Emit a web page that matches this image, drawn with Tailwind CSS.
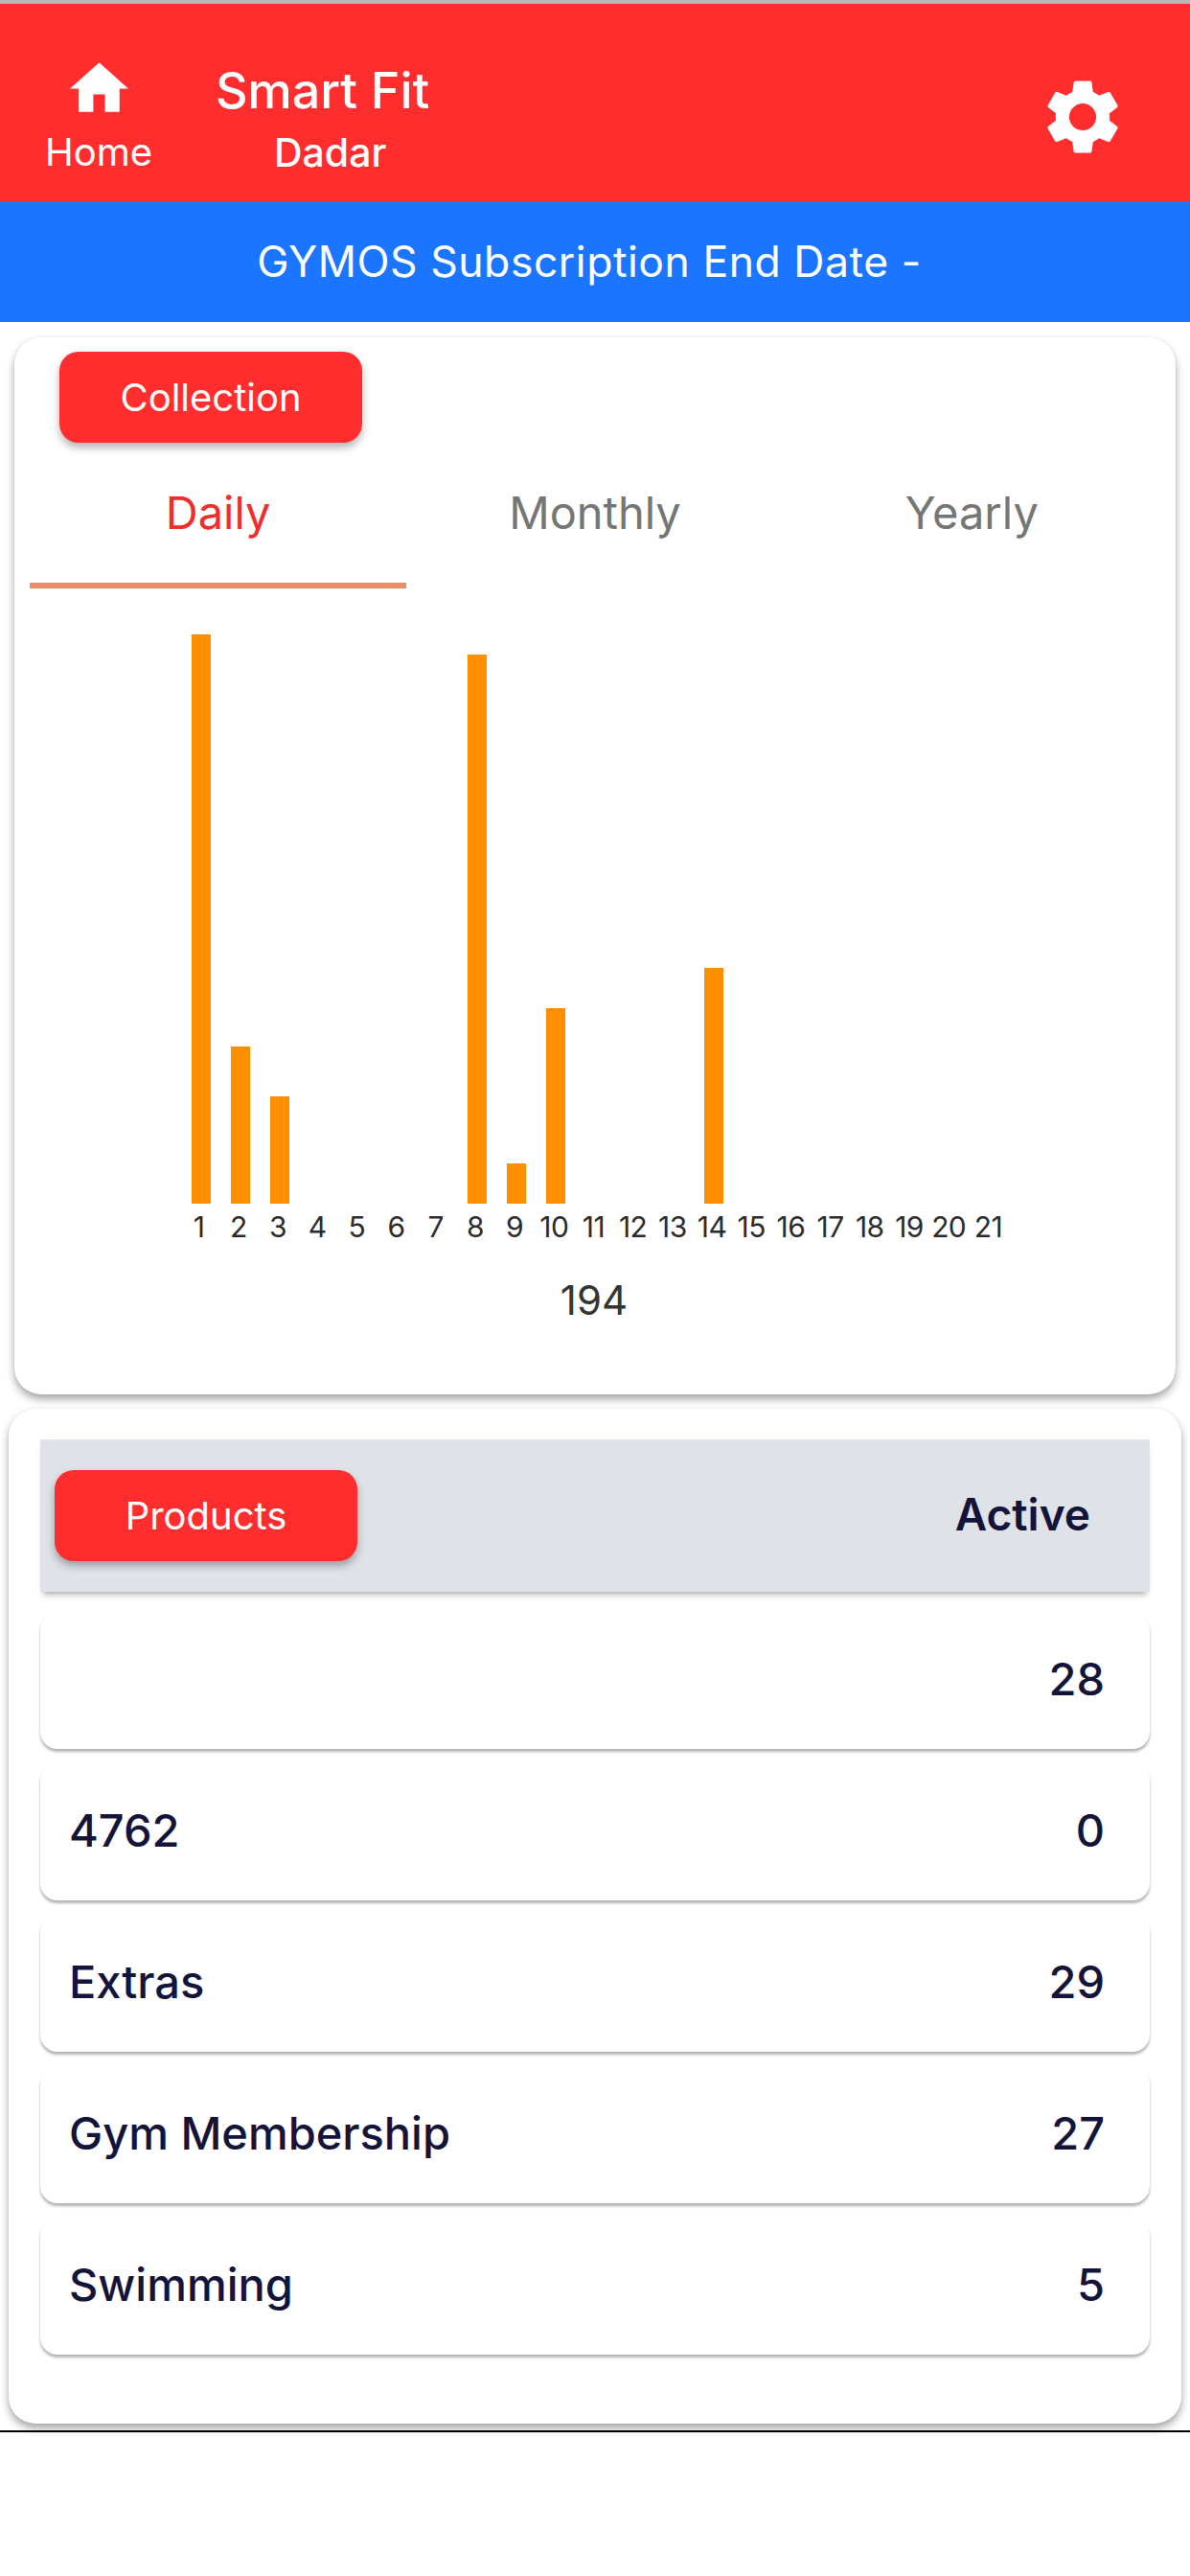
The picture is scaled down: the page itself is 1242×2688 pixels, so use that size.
<!DOCTYPE html>
<html><head><meta charset="utf-8">
<script src="https://cdn.jsdelivr.net/npm/@tailwindcss/browser@4"></script>
</head>
<body class="bg-white">
<div class="w-[1242px] h-[2688px] bg-white overflow-hidden font-['Inter',sans-serif]">
  <div class="h-[4px] bg-[#b8b8b8]"></div>
  <header class="h-[206px] bg-[#ff2d2d] text-white flex relative">
    <div class="w-[206px] pl-[47px] flex flex-col">
      <svg class="w-[73px] h-[73px] mt-[52px] ml-[20px] fill-white" viewBox="0 0 24 24"><path d="M10 20v-6h4v6h5v-8h3L12 3 2 12h3v8z"/></svg>
      <span class="w-[111px] text-center text-[40px] leading-[46px] mt-[7px] whitespace-nowrap">Home</span>
    </div>
    <div class="w-[260px] pl-[19px] flex flex-col">
      <span class="text-[52px] leading-[60px] mt-[61px] font-medium whitespace-nowrap">Smart Fit</span>
      <span class="text-[41px] leading-[46px] mt-[11px] ml-[61px] font-medium whitespace-nowrap">Dadar</span>
    </div>
    <div class="ml-auto mr-[65px] mt-[71px]">
      <svg class="w-[94px] h-[94px] fill-white" viewBox="0 0 24 24"><path d="M19.14 12.94c.04-.3.06-.61.06-.94 0-.32-.02-.64-.07-.94l2.03-1.58c.18-.14.23-.41.12-.61l-1.92-3.32c-.12-.22-.37-.29-.59-.22l-2.39.96c-.5-.38-1.03-.7-1.62-.94l-.36-2.54c-.04-.24-.24-.41-.48-.41h-3.84c-.24 0-.43.17-.47.41l-.36 2.54c-.59.24-1.13.57-1.62.94l-2.39-.96c-.22-.08-.47 0-.59.22L2.74 8.87c-.12.21-.08.47.12.61l2.03 1.58c-.05.3-.09.63-.09.94s.02.64.07.94l-2.03 1.58c-.18.14-.23.41-.12.61l1.92 3.32c.12.22.37.29.59.22l2.39-.96c.5.38 1.03.7 1.62.94l.36 2.54c.05.24.24.41.48.41h3.84c.24 0 .44-.17.47-.41l.36-2.54c.59-.24 1.13-.56 1.62-.94l2.39.96c.22.08.47 0 .59-.22l1.92-3.32c.12-.22.07-.47-.12-.61l-2.01-1.58zM12 15.6c-1.98 0-3.6-1.62-3.6-3.6s1.62-3.6 3.6-3.6 3.6 1.62 3.6 3.6-1.62 3.6-3.6 3.6z"/></svg>
    </div>
  </header>
  <div class="h-[126px] bg-[#1a76fe] text-white flex items-center justify-center pr-[12px] text-[44.5px] tracking-[0.012em]">GYMOS Subscription End Date -</div>

  <section class="mt-[16px] mx-[15px] h-[1103px] bg-white rounded-[28px] shadow-[0_5px_8px_rgba(0,0,0,0.35),0_0_3px_rgba(0,0,0,0.05)] pt-[15px] px-[16px]">
    <div class="ml-[31px] w-[316px] h-[95px] rounded-[20px] bg-[#ff2d2d] text-white flex items-center justify-center text-[40px] shadow-[0_5px_8px_rgba(0,0,0,0.3)]">Collection</div>
    <div class="mt-[32px] grid grid-cols-3 w-[1180px] text-[47px]">
      <div class="h-[120px] flex justify-center pt-[6px] text-[#f02d2d] border-b-[6px] border-[#ec8f67]">Daily</div>
      <div class="h-[120px] flex justify-center pt-[6px] text-[#757575]">Monthly</div>
      <div class="h-[120px] flex justify-center pt-[6px] text-[#757575]">Yearly</div>
    </div>
    <div class="ml-[158px] mt-[48px] h-[594px] w-[866px] grid grid-cols-[repeat(21,41.2px)] items-end justify-items-center">
      <div class="w-[20px] h-[594px] bg-[#ff8f00]"></div>
      <div class="w-[20px] h-[164px] bg-[#ff8f00]"></div>
      <div class="w-[20px] h-[112px] bg-[#ff8f00]"></div>
      <div></div><div></div><div></div><div></div>
      <div class="w-[20px] h-[573px] bg-[#ff8f00]"></div>
      <div class="w-[20px] h-[42px] bg-[#ff8f00]"></div>
      <div class="w-[20px] h-[204px] bg-[#ff8f00]"></div>
      <div></div><div></div><div></div>
      <div class="w-[20px] h-[246px] bg-[#ff8f00]"></div>
    </div>
    <div class="ml-[156px] mt-[6px] w-[866px] grid grid-cols-[repeat(21,41.2px)] justify-items-center text-[30px] leading-[36px] text-[#2b2b2b] tracking-[-0.02em]">
      <span>1</span><span>2</span><span>3</span><span>4</span><span>5</span><span>6</span><span>7</span><span>8</span><span>9</span><span>10</span><span>11</span><span>12</span><span>13</span><span>14</span><span>15</span><span>16</span><span>17</span><span>18</span><span>19</span><span>20</span><span>21</span>
    </div>
    <div class="mt-[34px] pr-[2px] text-center text-[42px] leading-[50px] text-[#333333] w-[1180px]">194</div>
  </section>

  <div class="h-[67px] relative">
    <section class="absolute left-[9px] top-[15px] w-[1224px] h-[1059px] bg-white rounded-[28px] shadow-[0_5px_8px_rgba(0,0,0,0.35),0_0_3px_rgba(0,0,0,0.05)] pt-[32px] px-[33px]">
      <div class="h-[159px] bg-[#dfe2e7] shadow-[0_6px_6px_-3px_rgba(0,0,0,0.3)] flex items-center pl-[15px] pr-[62px] justify-between">
        <div class="w-[316px] h-[95px] rounded-[20px] bg-[#ff2d2d] text-white flex items-center justify-center text-[40px] shadow-[0_5px_8px_rgba(0,0,0,0.3)]">Products</div>
        <span class="text-[46px] -mt-[2px] font-semibold text-[#14143a]">Active</span>
      </div>
      <div class="mt-[21px] flex flex-col gap-[15px] text-[47px] font-medium text-[#14143a]">
        <div class="h-[143px] rounded-[18px] bg-white shadow-[0_3px_3px_rgba(0,0,0,0.3),0_0_2px_rgba(0,0,0,0.02)] flex items-center justify-between pl-[30px] pr-[47px] pb-[3px]"><span></span><span>28</span></div>
        <div class="h-[143px] rounded-[18px] bg-white shadow-[0_3px_3px_rgba(0,0,0,0.3),0_0_2px_rgba(0,0,0,0.02)] flex items-center justify-between pl-[30px] pr-[47px] pb-[3px]"><span>4762</span><span>0</span></div>
        <div class="h-[143px] rounded-[18px] bg-white shadow-[0_3px_3px_rgba(0,0,0,0.3),0_0_2px_rgba(0,0,0,0.02)] flex items-center justify-between pl-[30px] pr-[47px] pb-[3px]"><span>Extras</span><span>29</span></div>
        <div class="h-[143px] rounded-[18px] bg-white shadow-[0_3px_3px_rgba(0,0,0,0.3),0_0_2px_rgba(0,0,0,0.02)] flex items-center justify-between pl-[30px] pr-[47px] pb-[3px]"><span>Gym Membership</span><span>27</span></div>
        <div class="h-[143px] rounded-[18px] bg-white shadow-[0_3px_3px_rgba(0,0,0,0.3),0_0_2px_rgba(0,0,0,0.02)] flex items-center justify-between pl-[30px] pr-[47px] pb-[3px]"><span>Swimming</span><span>5</span></div>
        <div class="h-[54px] rounded-t-[18px] bg-white shadow-[0_0_2px_rgba(0,0,0,0.02)]"></div>
      </div>
    </section>
    <div class="absolute left-0 top-[1081px] w-[1242px] h-[2px] bg-black"></div>
  </div>
</div>
</body></html>
